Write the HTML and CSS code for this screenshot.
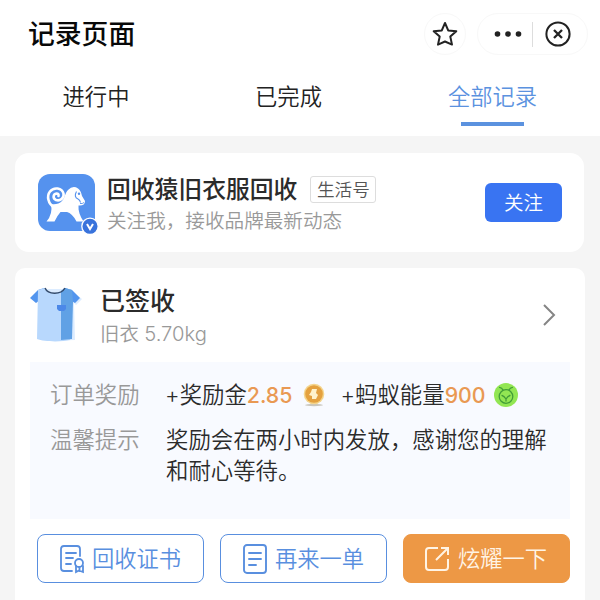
FILE: index.html
```html
<!DOCTYPE html>
<html lang="zh-CN">
<head>
<meta charset="utf-8">
<title>记录页面</title>
<link rel="stylesheet" href="styles.css">
</head>
<body>
<header class="header">
  <div class="topbar">
    <h1 class="page-title">记录页面</h1>
    <div class="round"><svg width="28" height="28" viewBox="0 0 28 28"><path d="M14 3L17.200 10.400 25.300 11.200 19.300 16.600 21 24.600 14 21.500 7 24.600 8.700 16.600 2.700 11.200 10.800 10.400z" fill="none" stroke="#222" stroke-width="2" stroke-linejoin="round"/></svg></div>
    <div class="capsule">
      <svg class="dots" width="28" height="8" viewBox="0 0 28 8" fill="#222"><circle cx="3.5" cy="4" r="2.800"/><circle cx="14" cy="4" r="2.800"/><circle cx="24.500" cy="4" r="2.800"/></svg>
      <span class="divider"></span>
      <svg width="28" height="28" viewBox="0 0 28 28" fill="none" stroke="#222"><circle cx="14" cy="14" r="11.600" stroke-width="2"/><path d="M10 10l8 8M18 10l-8 8" stroke-width="2.300"/></svg>
    </div>
  </div>
  <nav class="tabs">
    <a class="tab">进行中</a>
    <a class="tab">已完成</a>
    <a class="tab active">全部记录</a>
  </nav>
</header>
<main>
  <section class="card brand">
    <div class="logo">
      <svg width="62" height="62" viewBox="0 0 62 62">
        <rect width="57" height="57" rx="12" fill="#5592ee"/>
        <path d="M13 30Q20 31 24 27C27 24 27 19 30 16Q35 11 40 14.500Q43 16.500 44 22L47 27Q47 32 40.500 31.500C40 37 42 42 45.500 47.500H38.500Q34 39 29 38Q25 38 22.500 38Q19 42 16.500 47.500H8.500Q15 40 13 30z" fill="#fff"/>
        <path d="M16 33C10 30 8.500 22 12 17.500C16 12.500 24 14 25.500 19.500C26.500 24 22 27.500 18 26C14.500 24.500 15 20 18.500 19.500Q21 19.500 20.500 22" fill="none" stroke="#fff" stroke-width="2.600" stroke-linecap="round"/>
        <path d="M38.500 17.500Q35.500 23 40 25Q42 26 42.500 28.500" fill="none" stroke="#5592ee" stroke-width="1.100"/>
        <circle cx="41" cy="19.800" r="1.200" fill="#5592ee"/>
        <path d="M42 29.500q2.500 .500 4-1" fill="none" stroke="#5592ee" stroke-width=".900"/>
        <circle cx="52" cy="52.300" r="8.200" fill="#3973dc" stroke="#fff" stroke-width="1.300"/>
        <path d="M49 50l3 5 3-5" fill="none" stroke="#fff" stroke-width="2"/>
      </svg>
    </div>
    <div class="brand-text">
      <div class="brand-line"><h2>回收猿旧衣服回收</h2><span class="badge">生活号</span></div>
      <p>关注我，接收品牌最新动态</p>
    </div>
    <button class="follow"><span>关注</span></button>
  </section>
  <section class="card order">
    <div class="order-head">
      <svg class="shirt" width="52" height="56" viewBox="0 0 52 56">
        <path d="M14 2h25l13 10-6 6-2-2 1 37-27 1z" fill="#dcecff"/>
        <path d="M14 1L8 3 0 11l6 5 4-3zM35 1l7 2 8 8-5 5-5-3z" fill="#5295ee"/>
        <path d="M8 3l7-2c3 7 14 7 19 0l8 2-2 50c-8 2-26 2-33-1z" fill="#b8d8fd"/>
        <path d="M31 4l4-3 7 2 1 12-1 37-11 1z" fill="#60a1e5"/>
        <path d="M15 1c3 7 16 7 20 0" fill="none" stroke="#344b6b" stroke-width="1.500"/>
        <path d="M27 18h9v4l-2 2h-5l-2-2z" fill="#4c88e8"/>
      </svg>
      <div class="order-title"><h2>已签收</h2><p>旧衣 <span>5.70kg</span></p></div>
      <svg width="16" height="24" viewBox="0 0 16 24"><path d="M3 2l10 10L3 22" fill="none" stroke="#858585" stroke-width="2"/></svg>
    </div>
    <dl class="info">
      <dt>订单奖励</dt>
      <dd class="rewards">
        <span>+奖励金<b class="money">2.85</b></span>
        <svg class="coin" width="24" height="24" viewBox="0 0 24 24"><ellipse cx="12" cy="22" rx="9" ry="1.200" fill="#c9c6bd"/><circle cx="12" cy="11" r="10.300" fill="#f4d58d"/><circle cx="12" cy="11" r="8.800" fill="#e4a13f"/><path d="M10 6h5l-1 4 2 2-2 4h-4v-3l-3-1 2-3z" fill="#fff2ca"/></svg>
        <span class="energy">+蚂蚁能量<b>900</b></span>
        <svg class="ant" width="24" height="24" viewBox="0 0 24 24"><circle cx="12" cy="12" r="12" fill="#92e653"/><g fill="none" stroke="#429d38" stroke-width="1.300" stroke-linecap="round"><circle cx="12" cy="13.500" r="6.800"/><path d="M9 7Q8 4.500 5.500 4.300M15 7Q16 4.500 18.500 4.300M8 12.500q2 .500 4 3.500 2-3 4-3.500M12 16v2"/></g></svg>
      </dd>
      <dt>温馨提示</dt>
      <dd class="notice">奖励会在两小时内发放，感谢您的理解和耐心等待。</dd>
    </dl>
    <div class="actions">
      <button class="action"><svg width="26" height="30" viewBox="0 0 26 30" fill="none" stroke="#598fdf" stroke-width="1.800" stroke-linecap="round"><path d="M13 27H5q-3 0-3-3V5q0-3 3-3h13q3 0 3 3v7M7 9h10M7 14h7M7 20h5"/><circle cx="20" cy="19" r="4"/><path d="M17 22v6l3-1.500 4 1.500v-6M20.500 23v4"/></svg><span>回收证书</span></button>
      <button class="action"><svg width="26" height="32" viewBox="0 0 26 32" fill="none" stroke="#598fdf" stroke-width="1.900" stroke-linecap="round"><rect x="2" y="2" width="22" height="28" rx="3"/><path d="M7 10h12M7 16h12M7 22h7"/></svg><span>再来一单</span></button>
      <button class="action primary"><svg width="26" height="28" viewBox="0 0 26 28" fill="none" stroke="#fff4e5" stroke-width="2"><path d="M13 3H4Q1 3 1 6v16q0 3 3 3h16q3 0 3-3v-8M11 15L23 3M16 3h7v7"/></svg><span>炫耀一下</span></button>
    </div>
  </section>
</main>
</body>
</html>
```
FILE: styles.css
```css
* { box-sizing: border-box; }
body {
  margin: 0;
  height: 600px;
  overflow: hidden;
  background: #f5f5f5;
  color: #2b2b2b;
  font-family: Inter, "Noto Sans CJK SC", sans-serif;
  font-weight: 350;
}
h1, h2, p, dl, dd { margin: 0; }
svg { display: block; flex: none; }
button { font: inherit; padding: 0; }
.header { height: 136px; background: #fff; }
.topbar { display: flex; align-items: center; height: 68px; padding: 0 12px 0 28px; }
.page-title { flex: 1; font-size: 26.8px; font-weight: 500; line-height: 40px; color: #080808; }
.round, .capsule { height: 42px; border: 1px solid #f8f8f8; border-radius: 21px; display: flex; align-items: center; }
.round { width: 42px; justify-content: center; margin-right: 11px; }
.capsule { width: 111px; padding-left: 16px; }
.divider { width: 1px; height: 25px; background: #ddd; margin: 0 11px 0 10px; }
.tabs { display: flex; padding: 11px 0 0; }
.tab { flex: none; width: 193px; height: 47px; display: flex; flex-direction: column; align-items: center; font-size: 22.3px; line-height: 36px; color: #222; }
.tab:first-child { width: 192px; }
.tab.active { width: 215px; color: #5b92df; }
.active::after { content: ""; width: 63px; height: 4px; background: #5b92df; margin-top: 7px; }
.card { background: #fff; }
.brand { height: 99px; margin: 17px 16px 16px 15px; border-radius: 14px; padding: 0 22px 0 23px; display: flex; align-items: center; }
.logo { width: 69px; padding-top: 5px; }
.brand-text { flex: 1; padding-top: 2px; }
.brand-line { display: flex; align-items: center; height: 34px; gap: 13px; }
.brand h2 { font-size: 23.8px; font-weight: 500; line-height: 34px; }
.badge { width: 66px; height: 27px; border: 1px solid #ddd; border-radius: 3px; text-align: center; font-size: 17.6px; line-height: 25px; color: #555; }
.brand p { font-size: 19.6px; line-height: 28px; color: #999; }
.follow { width: 77px; height: 39px; border: 0; border-radius: 6px; background: #3974f2; color: #fff; font-size: 19.5px; line-height: 37px; }
.follow span { display: block; padding-top: 2px; }
.order { height: 350px; margin: 0 15px; border-radius: 10px 10px 0 0; padding: 0 15px; }
.order-head { display: flex; align-items: center; height: 94px; padding-right: 13px; }
.shirt { margin-right: 18px; }
.order-title { flex: 1; padding-top: 3px; }
.order h2 { font-size: 25px; font-weight: 500; line-height: 35px; }
.order-title p { font-size: 19.4px; line-height: 30px; color: #999; }
.order-title p span { font-size: 20.2px; }
.info { display: grid; grid-template-columns: 116px 1fr; height: 157px; align-content: start; padding: 17px 20px; background: #f8faff; font-size: 22.4px; line-height: 31px; row-gap: 13px; }
.info dt { color: #999; }
.info dd { margin-right: -10px; }
.info .rewards { display: flex; align-items: center; white-space: nowrap; margin-left: -1px; }
.info b { color: #e99953; font-weight: 500; font-size: 21.3px; }
.coin { margin: 0 14px 0 10px; }
.ant { margin-left: 8px; }
.actions { display: flex; gap: 16px; padding: 15px 0 0 7px; }
.action { width: 167px; height: 49px; border: 1.5px solid #598fdf; border-radius: 8px; background: #fff; color: #598fdf; font-size: 22.3px; line-height: 32px; display: flex; align-items: center; justify-content: center; gap: 8px; }
.action span { margin: 0 1px 0 -1px; }
.action.primary { background: #ed9845; border-color: #ed9845; color: #fff4e5; }
```
